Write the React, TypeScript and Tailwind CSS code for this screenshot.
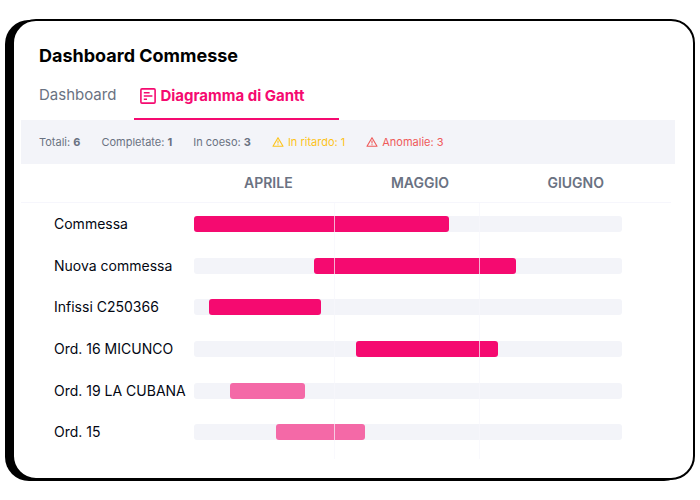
import type { ReactNode } from 'react'

const months = ['APRILE', 'MAGGIO', 'GIUGNO']

// start and end are percentages of the visible timeline
const orders = [
  { name: 'Commessa', start: 0, end: 59.6, planned: false },
  { name: 'Nuova commessa', start: 28.1, end: 75.2, planned: false },
  { name: 'Infissi C250366', start: 3.6, end: 29.7, planned: false },
  { name: 'Ord. 16 MICUNCO', start: 37.9, end: 71, planned: false },
  { name: 'Ord. 19 LA CUBANA', start: 8.3, end: 26, planned: true },
  { name: 'Ord. 15', start: 19.2, end: 40, planned: true },
]

const monthLines = [32.8, 66.5]

function GanttIcon() {
  return (
    <svg viewBox="0 0 16 16" className="size-4" fill="none" stroke="currentColor" strokeWidth="1.6" aria-hidden="true">
      <rect x="0.9" y="0.9" width="14.2" height="14.2" rx="1.1" />
      <path d="M3.8 4.7h5.8M3.8 8h8.6M3.8 11.3h3.2" />
    </svg>
  )
}

function WarningIcon() {
  return (
    <svg viewBox="0 0 12 12" className="size-3" fill="none" stroke="currentColor" strokeWidth="1.1" aria-hidden="true">
      <path d="M6 1.7 11 10.3H1Z" strokeLinejoin="round" />
      <path d="M6 4.6v2.9M6 8.2v1" />
    </svg>
  )
}

function Stat({ label, children }: { label: string; children: ReactNode }) {
  return (
    <span>
      {label}: <strong className="font-bold">{children}</strong>
    </span>
  )
}

export default function App() {
  return (
    <main className="bg-white pt-[19px] pr-[5px] pb-5 pl-3 font-['Inter',sans-serif]">
      <section className="rounded-3xl border-2 border-black bg-white pt-[23px] pb-[19px] shadow-[-7px_1px_0_0_#000]">
        <h1 className="pl-[25px] text-[18px] leading-6 font-bold text-black">Dashboard Commesse</h1>

        <nav className="mt-3 flex gap-[18px] pl-[25px] text-[15px]">
          <a href="#dashboard" className="h-10 pt-[3px] leading-6 text-gray-500">
            Dashboard
          </a>
          <a
            href="#gantt"
            aria-current="page"
            className="flex h-10 w-[205px] items-start gap-1 border-b-2 border-[#f50a70] pt-1 pl-1.5 leading-6 font-bold text-[#f50a70]"
          >
            <span className="flex h-6 items-center">
              <GanttIcon />
            </span>
            Diagramma di Gantt
          </a>
        </nav>

        <div className="mr-[18px] ml-[7px] flex h-11 items-center gap-[21px] bg-[#f3f4f9] pl-[18px] text-[11px] text-gray-500">
          <Stat label="Totali">6</Stat>
          <Stat label="Completate">1</Stat>
          <Stat label="In coeso">3</Stat>
          <span className="flex items-center gap-1 text-[#fdc31b]">
            <WarningIcon />
            In ritardo: 1
          </span>
          <span className="flex items-center gap-1 text-[#ef5a5a]">
            <WarningIcon />
            Anomalie: 3
          </span>
        </div>

        <div className="mr-[22px] ml-[7px] flex h-[39px] items-center justify-between border-b border-[#f6f6fc] pr-[67px] pl-[223px] text-[14px] leading-5 font-semibold text-gray-500">
          {months.map((month) => (
            <span key={month}>{month}</span>
          ))}
        </div>

        <div className="relative pr-[71px] pb-1.5 pl-10">
          <ul className="flex h-[250px] flex-col">
            {orders.map((order) => (
              <li key={order.name} className="flex flex-1 items-center">
                <span className="w-[140px] shrink-0 text-[14px] leading-5 whitespace-nowrap text-gray-950">
                  {order.name}
                </span>
                <div className="flex h-4 flex-1 rounded-[3px] bg-[#f3f4f9]">
                  <div
                    className={order.planned ? 'rounded-[3px] bg-[#f469a7]' : 'rounded-[3px] bg-[#f50a70]'}
                    style={{ marginLeft: `${order.start}%`, width: `${order.end - order.start}%` }}
                  />
                </div>
              </li>
            ))}
          </ul>

          {/* Month separators, drawn over the bars */}
          <div className="pointer-events-none absolute inset-y-0 right-[71px] left-[180px]">
            {monthLines.map((left) => (
              <div key={left} className="absolute inset-y-0 w-px bg-[#f6f6fc]/70" style={{ left: `${left}%` }} />
            ))}
          </div>
        </div>
      </section>
    </main>
  )
}
